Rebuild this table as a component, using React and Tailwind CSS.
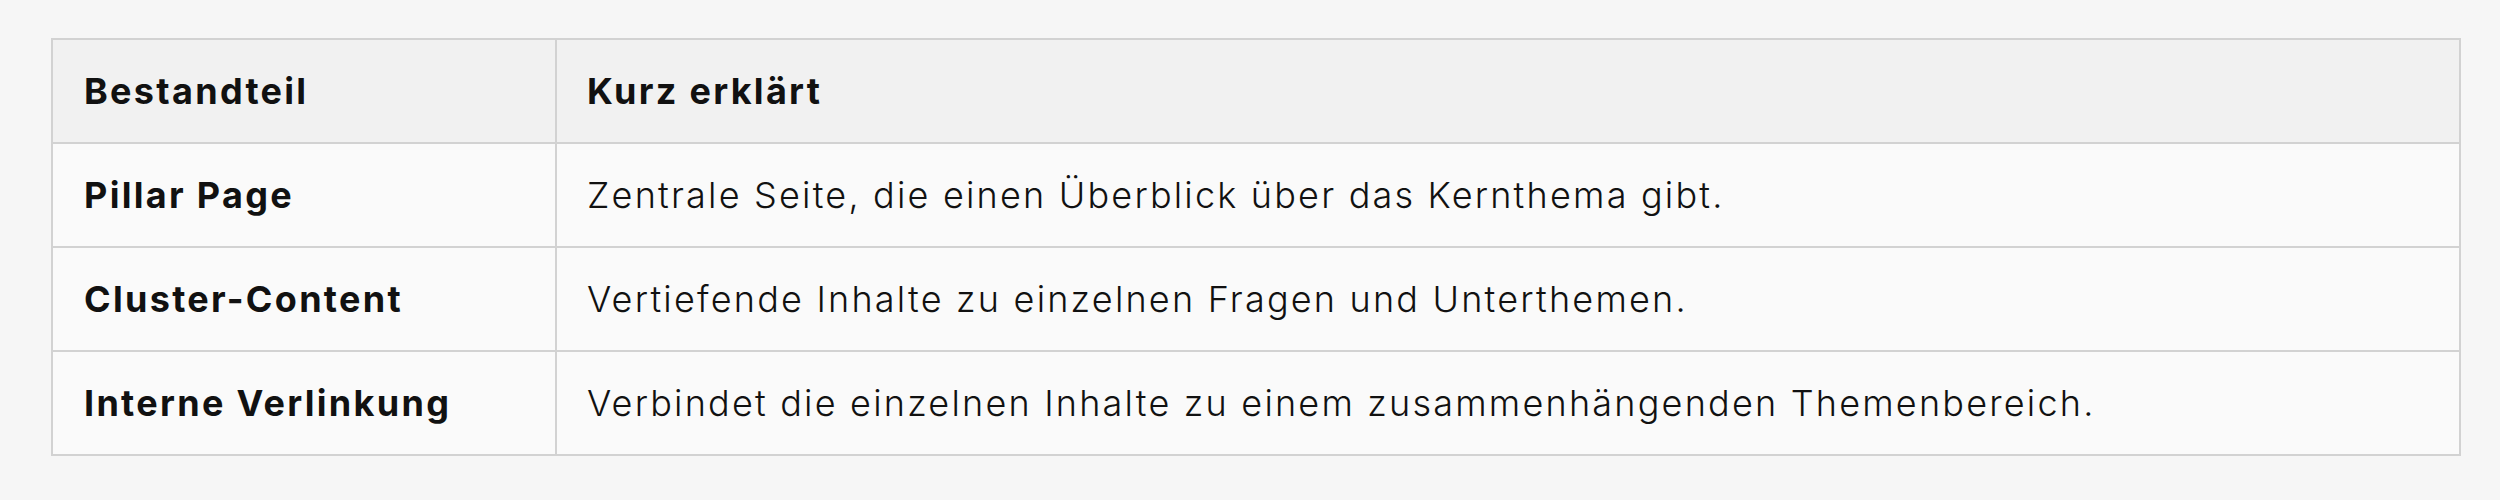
import React from 'react';

const rows = [
  ['Pillar Page', 'Zentrale Seite, die einen Überblick über das Kernthema gibt.'],
  ['Cluster-Content', 'Vertiefende Inhalte zu einzelnen Fragen und Unterthemen.'],
  ['Interne Verlinkung', 'Verbindet die einzelnen Inhalte zu einem zusammenhängenden Themenbereich.'],
];

const App = () => {
  return (
    <div className="min-h-[500px] w-[2500px] bg-[#f6f6f6] pt-[38px] pl-[51px] font-['Inter',sans-serif] text-[#111]">
      <table className="w-[2410px] border-collapse border-2 border-[#d2d2d2] text-[36px]">
        <thead>
          <tr className="bg-[#f1f1f1] h-[104px]">
            <th className="w-[504px] border-2 border-[#d2d2d2] px-[31px] text-left font-bold tracking-[2.3px]">Bestandteil</th>
            <th className="border-2 border-[#d2d2d2] px-[30px] text-left font-bold tracking-[2.3px]">Kurz erklärt</th>
          </tr>
        </thead>
        <tbody>
          {rows.map(([name, text]) => (
            <tr key={name} className="bg-[#fafafa] h-[104px]">
              <td className="border-2 border-[#d2d2d2] px-[31px] font-bold tracking-[2.3px]">{name}</td>
              <td className="border-2 border-[#d2d2d2] px-[30px] font-light tracking-[2.2px]">{text}</td>
            </tr>
          ))}
        </tbody>
      </table>
    </div>
  );
};

export default App;
